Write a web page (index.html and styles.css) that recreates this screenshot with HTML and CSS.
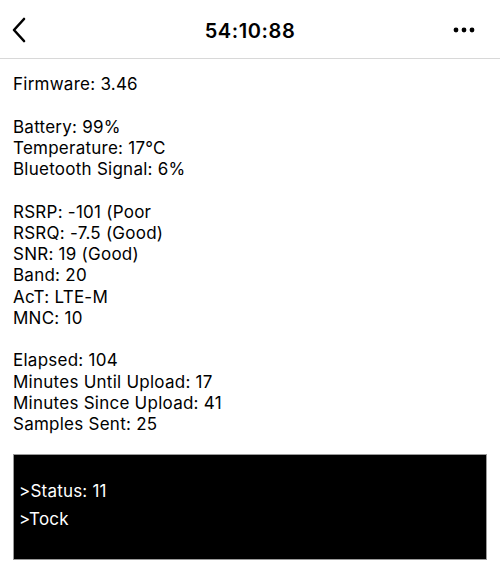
FILE: index.html
```html
<!DOCTYPE html>
<html>
<head>
<meta charset="utf-8">
<link rel="stylesheet" href="styles.css">
</head>
<body>
<header class="nav">
  <svg class="back" width="16" height="26" viewBox="0 0 16 26"><path d="M13 2 L3 13 L13 24" fill="none" stroke="#000" stroke-width="2.6" stroke-linecap="round" stroke-linejoin="round"/></svg>
  <div class="title">54:10:88</div>
  <svg class="more" width="22" height="6" viewBox="0 0 22 6"><circle cx="3" cy="3" r="2.4"/><circle cx="11" cy="3" r="2.4"/><circle cx="19" cy="3" r="2.4"/></svg>
</header>
<main class="content">
  <div class="line">Firmware: 3.46</div>
  <div class="line blank"></div>
  <div class="line">Battery: 99%</div>
  <div class="line">Temperature: 17°C</div>
  <div class="line">Bluetooth Signal: 6%</div>
  <div class="line blank"></div>
  <div class="line">RSRP: -101 (Poor</div>
  <div class="line">RSRQ: -7.5 (Good)</div>
  <div class="line">SNR: 19 (Good)</div>
  <div class="line">Band: 20</div>
  <div class="line">AcT: LTE-M</div>
  <div class="line">MNC: 10</div>
  <div class="line blank"></div>
  <div class="line">Elapsed: 104</div>
  <div class="line">Minutes Until Upload: 17</div>
  <div class="line">Minutes Since Upload: 41</div>
  <div class="line">Samples Sent: 25</div>
  <div class="console">
    <div class="cline">&gt;Status: 11</div>
    <div class="cline">&gt;Tock</div>
  </div>
</main>
</body>
</html>
```
FILE: styles.css
```css
html, body {
  margin: 0;
  padding: 0;
  background: #fff;
}
body {
  font-family: Inter, "Liberation Sans", sans-serif;
  color: #000;
  width: 500px;
}
.nav {
  height: 59px;
  border-bottom: 1px solid #d8d8d8;
  display: flex;
  align-items: center;
  justify-content: space-between;
  padding: 0 25px 0 11px;
  box-sizing: border-box;
  position: relative;
}
.back {
  display: block;
  margin-top: 2px;
}
.title {
  position: absolute;
  left: 0;
  right: 0;
  text-align: center;
  font-size: 20px;
  font-weight: 600;
  letter-spacing: 0.6px;
  top: 19px;
  line-height: 24px;
}
.more {
  display: block;
  fill: #000;
  margin-top: 1px;
}
.content {
  padding: 15px 13px 0 13px;
}
.line {
  font-size: 17px;
  letter-spacing: 0.25px;
  line-height: 21.25px;
  height: 21.25px;
  white-space: nowrap;
}
.console {
  margin-top: 19px;
  background: #000;
  color: #fff;
  height: 106px;
  box-sizing: border-box;
  border: 1px solid #9a9a9a;
  padding: 22px 5px 0 5px;
}
.cline {
  font-size: 17px;
  letter-spacing: 0.2px;
  line-height: 28px;
}
```
